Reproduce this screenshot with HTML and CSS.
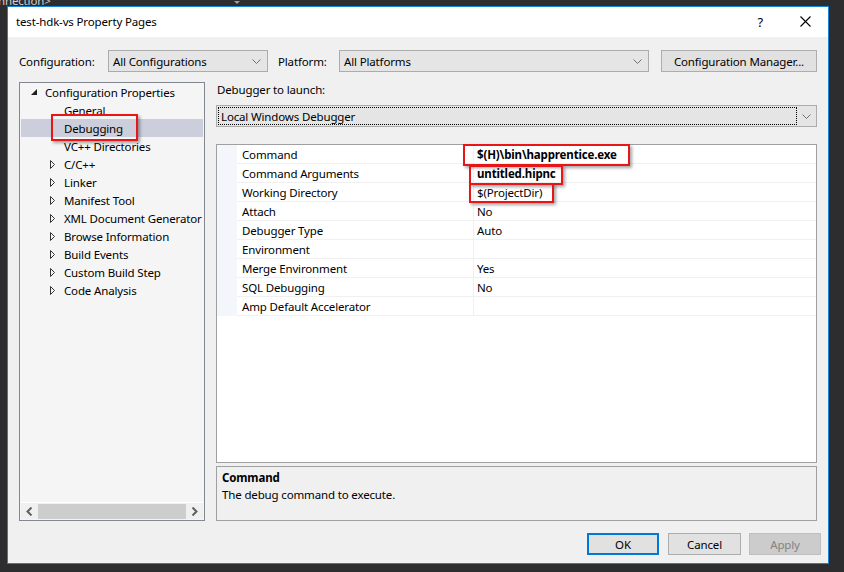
FILE: index.html
```html
<!DOCTYPE html>
<html>
<head>
<meta charset="utf-8">
<link rel="stylesheet" href="styles.css">
</head>
<body>
<div class="topstrip">
  <span class="bg-text">nnection&gt;</span>
  <span class="bg-arrow"></span>
</div>
<div class="frame">
  <div class="gutter-left"></div>
  <div class="dialog">
    <div class="titlebar">
      <span class="title">test-hdk-vs Property Pages</span>
      <span class="help">?</span>
      <svg class="close" width="11" height="11" viewBox="0 0 11 11"><path d="M0.5 0.5 L10.5 10.5 M10.5 0.5 L0.5 10.5" stroke="#000" stroke-width="1.1" fill="none"/></svg>
    </div>
    <div class="content">
      <div class="config-row">
        <span class="lbl lbl-config">Configuration:</span>
        <div class="select sel-config"><span>All Configurations</span><svg class="chev" width="9" height="5" viewBox="0 0 9 5"><path d="M0.5 0.5 L4.5 4.5 L8.5 0.5" stroke="#707070" fill="none"/></svg></div>
        <span class="lbl lbl-platform">Platform:</span>
        <div class="select sel-platform"><span>All Platforms</span><svg class="chev" width="9" height="5" viewBox="0 0 9 5"><path d="M0.5 0.5 L4.5 4.5 L8.5 0.5" stroke="#707070" fill="none"/></svg></div>
        <div class="btn btn-mgr">Configuration Manager...</div>
      </div>
      <div class="body">
        <div class="tree">
          <div class="tree-list">
            <div class="trow l0"><span class="tw"><svg width="6" height="6" viewBox="0 0 6 6"><path d="M6 0 L6 6 L0 6 Z" fill="#1e1e1e"/></svg></span>Configuration Properties</div>
            <div class="trow l1"><span class="tw"></span>General</div>
            <div class="trow l1 sel"><span class="tw"></span>Debugging</div>
            <div class="trow l1"><span class="tw"></span>VC++ Directories</div>
            <div class="trow l1"><span class="tw"><svg width="6" height="9" viewBox="0 0 6 9"><path d="M0.5 0.5 L4.5 4.5 L0.5 8.5 Z" fill="none" stroke="#333"/></svg></span>C/C++</div>
            <div class="trow l1"><span class="tw"><svg width="6" height="9" viewBox="0 0 6 9"><path d="M0.5 0.5 L4.5 4.5 L0.5 8.5 Z" fill="none" stroke="#333"/></svg></span>Linker</div>
            <div class="trow l1"><span class="tw"><svg width="6" height="9" viewBox="0 0 6 9"><path d="M0.5 0.5 L4.5 4.5 L0.5 8.5 Z" fill="none" stroke="#333"/></svg></span>Manifest Tool</div>
            <div class="trow l1"><span class="tw"><svg width="6" height="9" viewBox="0 0 6 9"><path d="M0.5 0.5 L4.5 4.5 L0.5 8.5 Z" fill="none" stroke="#333"/></svg></span>XML Document Generator</div>
            <div class="trow l1"><span class="tw"><svg width="6" height="9" viewBox="0 0 6 9"><path d="M0.5 0.5 L4.5 4.5 L0.5 8.5 Z" fill="none" stroke="#333"/></svg></span>Browse Information</div>
            <div class="trow l1"><span class="tw"><svg width="6" height="9" viewBox="0 0 6 9"><path d="M0.5 0.5 L4.5 4.5 L0.5 8.5 Z" fill="none" stroke="#333"/></svg></span>Build Events</div>
            <div class="trow l1"><span class="tw"><svg width="6" height="9" viewBox="0 0 6 9"><path d="M0.5 0.5 L4.5 4.5 L0.5 8.5 Z" fill="none" stroke="#333"/></svg></span>Custom Build Step</div>
            <div class="trow l1"><span class="tw"><svg width="6" height="9" viewBox="0 0 6 9"><path d="M0.5 0.5 L4.5 4.5 L0.5 8.5 Z" fill="none" stroke="#333"/></svg></span>Code Analysis</div>
          </div>
          <div class="hscroll">
            <span class="arrow"><svg width="7" height="9" viewBox="0 0 7 9"><path d="M5.5 0.5 L1.5 4.5 L5.5 8.5" stroke="#606060" stroke-width="2" fill="none"/></svg></span>
            <span class="thumb"></span>
            <span class="arrow"><svg width="7" height="9" viewBox="0 0 7 9"><path d="M1.5 0.5 L5.5 4.5 L1.5 8.5" stroke="#606060" stroke-width="2" fill="none"/></svg></span>
          </div>
          <div class="callout co-tree"></div>
        </div>
        <div class="main">
          <div class="launch-lbl">Debugger to launch:</div>
          <div class="select sel-debugger"><span class="focus">Local Windows Debugger</span><svg class="chev" width="9" height="5" viewBox="0 0 9 5"><path d="M0.5 0.5 L4.5 4.5 L8.5 0.5" stroke="#707070" fill="none"/></svg></div>
          <div class="grid">
            <div class="grow"><span class="gm"></span><span class="gn">Command</span><span class="gv b">$(H)\bin\happrentice.exe</span></div>
            <div class="grow"><span class="gm"></span><span class="gn">Command Arguments</span><span class="gv b">untitled.hipnc</span></div>
            <div class="grow"><span class="gm"></span><span class="gn">Working Directory</span><span class="gv">$(ProjectDir)</span></div>
            <div class="grow"><span class="gm"></span><span class="gn">Attach</span><span class="gv">No</span></div>
            <div class="grow"><span class="gm"></span><span class="gn">Debugger Type</span><span class="gv">Auto</span></div>
            <div class="grow"><span class="gm"></span><span class="gn">Environment</span><span class="gv"></span></div>
            <div class="grow"><span class="gm"></span><span class="gn">Merge Environment</span><span class="gv">Yes</span></div>
            <div class="grow"><span class="gm"></span><span class="gn">SQL Debugging</span><span class="gv">No</span></div>
            <div class="grow"><span class="gm"></span><span class="gn">Amp Default Accelerator</span><span class="gv"></span></div>
            <div class="callout co-cmd"></div>
            <div class="callout co-args"></div>
            <div class="callout co-dir"></div>
          </div>
          <div class="desc">
            <div class="desc-title">Command</div>
            <div class="desc-text">The debug command to execute.</div>
          </div>
        </div>
      </div>
      <div class="buttons">
        <div class="btn btn-ok">OK</div>
        <div class="btn btn-cancel">Cancel</div>
        <div class="btn btn-dis">Apply</div>
      </div>
    </div>
  </div>
  <div class="gutter-right"></div>
</div>
</body>
</html>
```
FILE: styles.css
```css
* { box-sizing: border-box; }
html, body {
  margin: 0;
  padding: 0;
}
body {
  width: 844px;
  height: 572px;
  overflow: hidden;
  background: #2d2d30;
  font-family: "Noto Sans", "Open Sans", sans-serif;
  font-size: 11.5px;
  letter-spacing: -0.15px;
  color: #000;
}
.topstrip {
  height: 6px;
  overflow: hidden;
  position: relative;
  color: #d0d0d0;
  background: #2d2d30;
}
.bg-text {
  display: block;
  margin-top: -6px;
  margin-left: -2px;
  line-height: 14px;
}
.bg-arrow {
  position: absolute;
  left: 234px;
  top: 1px;
  border-left: 3px solid transparent;
  border-right: 3px solid transparent;
  border-top: 3px solid #a0a0a0;
}
.frame {
  display: flex;
  height: 558px;
}
.gutter-left { width: 7px; }
.gutter-right {
  flex: 1;
  border-left: 1px solid #252526;
  background: #2d2d30;
}
.dialog {
  width: 822px;
  border: 1px solid #1883d7;
  display: flex;
  flex-direction: column;
  background: #f0f0f0;
}
.titlebar {
  height: 30px;
  background: #fff;
  display: flex;
  align-items: center;
  padding-left: 8px;
  padding-bottom: 1px;
  flex-shrink: 0;
}
.title {
  flex: 1;
}
.help {
  font-size: 13px;
  margin-right: 37px;
}
.close {
  margin-right: 17px;
}
.content {
  flex: 1;
  padding: 13px 7px 8px 11px;
  display: flex;
  flex-direction: column;
}
.config-row {
  display: flex;
  align-items: center;
  height: 22px;
  margin-right: 3px;
}
.lbl-config { width: 89px; }
.lbl-platform { width: 61px; margin-left: 10px; }
.select {
  height: 22px;
  border: 1px solid #acacac;
  background: #e5e5e5;
  display: flex;
  align-items: center;
  padding-left: 4px;
  padding-right: 6px;
}
.select > span { flex: 1; }
.sel-config { width: 160px; }
.sel-platform { width: 310px; }
.btn {
  width: 72px;
  height: 22px;
  border: 1px solid #adadad;
  background: #e1e1e1;
  display: flex;
  align-items: center;
  justify-content: center;
}
.btn-mgr {
  width: 156px;
  margin-left: 12px;
}
.body {
  margin-top: 10px;
  height: 439px;
  display: flex;
  gap: 11px;
}
.tree {
  width: 186px;
  border: 1px solid #828790;
  background: #f5f5f5;
  display: flex;
  flex-direction: column;
  position: relative;
}
.tree-list {
  flex: 1;
  padding: 0 1px;
}
.trow {
  height: 18px;
  display: flex;
  align-items: center;
  white-space: nowrap;
}
.trow.l0 { padding-left: 9px; }
.trow.l1 { padding-left: 28px; }
.tw {
  width: 15px;
  height: 18px;
  display: flex;
  align-items: center;
  padding-left: 1px;
  flex-shrink: 0;
}
.trow.sel { background: #cccedb; }
.hscroll {
  height: 17px;
  margin: 0 1px 1px;
  display: flex;
  align-items: center;
  background: #f0f0f0;
  border-top: 1px solid #fff;
}
.arrow {
  width: 17px;
  height: 16px;
  display: flex;
  align-items: center;
  justify-content: center;
}
.thumb {
  flex: 1;
  height: 15px;
  background: #cdcdcd;
}
.callout {
  position: absolute;
  border: 2px solid #e81616;
  box-shadow: 2px 2px 3px rgba(0, 0, 0, 0.35);
}
.co-tree { left: 31px; top: 31px; width: 87px; height: 27px; }
.main {
  width: 601px;
  display: flex;
  flex-direction: column;
}
.launch-lbl {
  height: 16px;
  line-height: 15px;
  margin-bottom: 7px;
  padding-left: 1px;
}
.sel-debugger {
  width: 601px;
  padding: 1px 0 1px 1px;
}
.focus {
  height: 18px;
  border: 1px dotted #000;
  display: flex;
  align-items: center;
  padding-left: 2px;
  margin-right: 5px;
}
.sel-debugger .chev { margin-right: 5px; }
.grid {
  margin-top: 17px;
  height: 319px;
  border: 1px solid #a0a0a0;
  background: #fff;
  position: relative;
}
.grow {
  height: 19px;
  display: flex;
}
.gm {
  width: 20px;
  background: #f3f6fb;
}
.gn {
  width: 237px;
  padding-left: 5px;
  display: flex;
  align-items: center;
  border-bottom: 1px solid #f0f0f0;
  border-right: 1px solid #f0f0f0;
}
.gv {
  flex: 1;
  padding-left: 3px;
  display: flex;
  align-items: center;
  border-bottom: 1px solid #f0f0f0;
}
.gv.b { font-weight: bold; }
.co-cmd { left: 246px; top: -1px; width: 167px; height: 22px; }
.co-args { left: 252px; top: 20px; width: 94px; height: 20px; }
.co-dir { left: 252px; top: 38px; width: 85px; height: 20px; }
.desc {
  margin-top: 3px;
  height: 55px;
  border: 1px solid #a0a0a0;
  padding: 2px 5px;
}
.desc-title {
  font-weight: bold;
  line-height: 17px;
}
.desc-text {
  line-height: 17px;
}
.buttons {
  margin-top: 12px;
  display: flex;
  justify-content: flex-end;
  gap: 8px;
}
.btn-ok {
  border: 2px solid #0078d7;
  margin-right: 1px;
}
.btn-cancel { width: 73px; }
.btn-dis {
  background: #cccccc;
  border-color: #bfbfbf;
  color: #838383;
}
```
